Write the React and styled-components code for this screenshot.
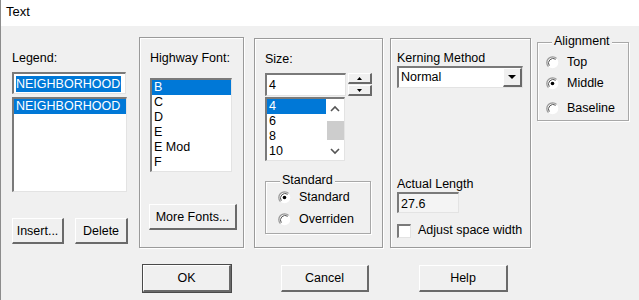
import styled, { createGlobalStyle } from 'styled-components';

const GlobalStyle = createGlobalStyle`
  html, body {
    margin: 0;
    padding: 0;
    background: #f0f0f0;
  }
  body {
    font-family: "Liberation Sans", Arial, sans-serif;
    font-size: 12.5px;
    color: #000;
  }
`;

const App = () => {
  return (
    <Window>
      <GlobalStyle />
      <TitleBar>Text</TitleBar>
      <Body>
        <PanelRow>
          <LegendColumn>
            <Label>Legend:</Label>
            <EditBox $width={114} $height={22}>
              <Selected>NEIGHBORHOOD</Selected>
            </EditBox>
            <ListBox $width={115} $height={95} $top={3}>
              <ListItem $selected>NEIGHBORHOOD</ListItem>
            </ListBox>
            <ButtonRow>
              <Button $width={52} $height={26}>Insert...</Button>
              <Button $width={53} $height={26}>Delete</Button>
            </ButtonRow>
          </LegendColumn>

          <Panel $width={105} $height={211} $left={11}>
            <Label>Highway Font:</Label>
            <ListBox $width={82} $height={94} $top={6}>
              <ListItem $selected>B</ListItem>
              <ListItem>C</ListItem>
              <ListItem>D</ListItem>
              <ListItem>E</ListItem>
              <ListItem>E Mod</ListItem>
              <ListItem>F</ListItem>
            </ListBox>
            <Button $width={88} $height={26} $top={32} $shift={-1}>
              More Fonts...
            </Button>
          </Panel>

          <Panel $width={129} $height={210} $left={10} $offset={1}>
            <Label>Size:</Label>
            <SpinRow>
              <EditBox $width={81} $height={23} $top={0}>4</EditBox>
              <Spinner>
                <SpinHalf>
                  <svg width="5" height="3" viewBox="0 0 5 3">
                    <path d="M2.5 0 L5 3 L0 3 Z" fill="#000" />
                  </svg>
                </SpinHalf>
                <SpinHalf>
                  <svg width="5" height="3" viewBox="0 0 5 3">
                    <path d="M0 0 L5 0 L2.5 3 Z" fill="#000" />
                  </svg>
                </SpinHalf>
              </Spinner>
            </SpinRow>
            <ListBox $width={80} $height={64} $top={1} $scroll>
              <ListInner>
                <ListItem $selected>4</ListItem>
                <ListItem>6</ListItem>
                <ListItem>8</ListItem>
                <ListItem>10</ListItem>
              </ListInner>
              <ScrollBar>
                <svg width="10" height="7" viewBox="0 0 10 7">
                  <path d="M1 6 L5 2 L9 6" stroke="#555" strokeWidth="1.6" fill="none" />
                </svg>
                <Thumb />
                <svg width="10" height="7" viewBox="0 0 10 7">
                  <path d="M1 1 L5 5 L9 1" stroke="#555" strokeWidth="1.6" fill="none" />
                </svg>
              </ScrollBar>
            </ListBox>
            <GroupBox $width={106} $height={53} $top={20}>
              <GroupLegend $left={14}>Standard</GroupLegend>
              <RadioRow $top={8} $left={12}>
                <Radio checked />
                <span>Standard</span>
              </RadioRow>
              <RadioRow $top={7} $left={12}>
                <Radio />
                <span>Overriden</span>
              </RadioRow>
            </GroupBox>
          </Panel>

          <Panel $width={141} $height={210} $left={7} $offset={1} $pad={6} $padTop={12}>
            <Label $gap={0}>Kerning Method</Label>
            <Combo>
              <ComboText>Normal</ComboText>
              <ComboButton>
                <svg width="8" height="4" viewBox="0 0 8 4">
                  <path d="M0 0 L8 0 L4 4 Z" fill="#000" />
                </svg>
              </ComboButton>
            </Combo>
            <Label $top={89} $gap={0}>Actual Length</Label>
            <EditBox $width={62} $height={21} $top={0} $readonly>27.6</EditBox>
            <CheckRow>
              <CheckBox />
              <span>Adjust space width</span>
            </CheckRow>
          </Panel>

          <GroupBox $width={92} $height={79} $top={5} $left={6}>
            <GroupLegend $left={14}>Alignment</GroupLegend>
            <RadioRow $top={12} $left={8}>
              <Radio />
              <span>Top</span>
            </RadioRow>
            <RadioRow $top={6} $left={8}>
              <Radio checked />
              <span>Middle</span>
            </RadioRow>
            <RadioRow $top={10} $left={8}>
              <Radio />
              <span>Baseline</span>
            </RadioRow>
          </GroupBox>
        </PanelRow>

        <DialogButtons>
          <Button $width={88} $height={27} $default>OK</Button>
          <Button $width={88} $height={27}>Cancel</Button>
          <Button $width={89} $height={27}>Help</Button>
        </DialogButtons>
      </Body>
    </Window>
  );
};

const Radio = ({ checked }) => (
  <RadioIcon width="13" height="13" viewBox="0 0 13 13">
    <circle cx="6.5" cy="6.5" r="5.8" fill="#fff" />
    <path d="M2.4 10.6 A5.8 5.8 0 0 1 10.6 2.4" stroke="#9a9a9a" strokeWidth="1.3" fill="none" />
    <path d="M3.3 9.7 A4.6 4.6 0 0 1 9.7 3.3" stroke="#555" strokeWidth="1" fill="none" />
    {checked && <circle cx="6.5" cy="6.5" r="1.8" fill="#000" />}
  </RadioIcon>
);

export default App;

const Window = styled.div`
  width: 639px;
  height: 300px;
  background: #f0f0f0;
  border-left: 1px solid #8c8c8c;
  box-sizing: border-box;
  overflow: hidden;
`;

const TitleBar = styled.div`
  height: 26px;
  background: #fff;
  padding-left: 5px;
  font-size: 13px;
  line-height: 24px;
`;

const Body = styled.div`
  padding: 11px 0 0 11px;
`;

const PanelRow = styled.div`
  display: flex;
  align-items: flex-start;
`;

const LegendColumn = styled.div`
  width: 116px;
  display: flex;
  flex-direction: column;
  padding-top: 14px;
`;

const Panel = styled.div`
  box-sizing: border-box;
  width: ${(p) => p.$width}px;
  height: ${(p) => p.$height}px;
  margin-left: ${(p) => p.$left || 0}px;
  margin-top: ${(p) => p.$offset || 0}px;
  border: 1px solid #9a9a9a;
  box-shadow: inset 1px 1px 0 #fff, 1px 1px 0 #fff;
  padding: ${(p) => p.$padTop ?? 13}px 0 0 ${(p) => p.$pad || 10}px;
  display: flex;
  flex-direction: column;
  align-items: flex-start;
`;

const Label = styled.div`
  line-height: 15px;
  margin-top: ${(p) => p.$top || 0}px;
  margin-bottom: ${(p) => p.$gap ?? 6}px;
  white-space: nowrap;
`;

const EditBox = styled.div`
  box-sizing: border-box;
  width: ${(p) => p.$width}px;
  height: ${(p) => p.$height}px;
  margin-top: ${(p) => p.$top || 0}px;
  background: ${(p) => (p.$readonly ? '#f4f4f4' : '#fff')};
  border-style: solid;
  border-width: 2px 1px 1px 2px;
  border-color: #7a7a7a #e3e3e3 #e3e3e3 #7a7a7a;
  padding: 2px 0 0 2px;
  line-height: 16px;
  white-space: nowrap;
`;

const Selected = styled.span`
  background: #0078d7;
  color: #fff;
  padding: 1px 1px 1px 0;
`;

const ListBox = styled.div`
  box-sizing: border-box;
  width: ${(p) => p.$width}px;
  height: ${(p) => p.$height}px;
  margin-top: ${(p) => p.$top || 0}px;
  background: #fff;
  border-style: solid;
  border-width: 2px 1px 1px 2px;
  border-color: #7a7a7a #e3e3e3 #e3e3e3 #7a7a7a;
  overflow: hidden;
  display: ${(p) => (p.$scroll ? 'flex' : 'block')};
`;

const ListInner = styled.div`
  flex: 1;
`;

const ListItem = styled.div`
  height: 15px;
  line-height: 15px;
  padding-left: 2px;
  background: ${(p) => (p.$selected ? '#0078d7' : 'transparent')};
  color: ${(p) => (p.$selected ? '#fff' : '#000')};
  white-space: nowrap;
`;

const ScrollBar = styled.div`
  width: 18px;
  background: #fff;
  display: flex;
  flex-direction: column;
  align-items: center;
  justify-content: space-between;
  padding: 6px 0 5px;
  box-sizing: border-box;
`;

const Thumb = styled.div`
  width: 17px;
  height: 19px;
  background: #cdcdcd;
`;

const ButtonRow = styled.div`
  display: flex;
  gap: 11px;
  margin-top: 26px;
`;

const Button = styled.div`
  box-sizing: border-box;
  width: ${(p) => p.$width}px;
  height: ${(p) => p.$height}px;
  margin-top: ${(p) => p.$top || 0}px;
  margin-left: ${(p) => p.$shift || 0}px;
  background: #f0f0f0;
  border-style: solid;
  border-width: 1px 2px 2px 1px;
  border-color: #fff #6a6a6a #6a6a6a #fff;
  box-shadow: ${(p) => (p.$default ? '0 0 0 1px #4a4a4a' : 'none')};
  display: flex;
  align-items: center;
  justify-content: center;
  white-space: nowrap;
`;

const SpinRow = styled.div`
  display: flex;
  gap: 2px;
`;

const Spinner = styled.div`
  width: 24px;
  height: 23px;
  display: flex;
  flex-direction: column;
  gap: 1px;
`;

const SpinHalf = styled.div`
  flex: 1;
  box-sizing: border-box;
  border-style: solid;
  border-width: 1px 2px 2px 1px;
  border-color: #fff #6a6a6a #6a6a6a #fff;
  display: flex;
  align-items: center;
  justify-content: center;
`;

const GroupBox = styled.div`
  position: relative;
  box-sizing: border-box;
  width: ${(p) => p.$width}px;
  height: ${(p) => p.$height}px;
  margin-top: ${(p) => p.$top || 0}px;
  margin-left: ${(p) => p.$left || 0}px;
  border: 1px solid #a8a8a8;
  box-shadow: inset 1px 1px 0 #fff, 1px 1px 0 #fff;
  display: flex;
  flex-direction: column;
`;

const GroupLegend = styled.div`
  position: absolute;
  top: -9px;
  left: ${(p) => p.$left}px;
  background: #f0f0f0;
  padding: 0 2px;
  line-height: 15px;
`;

const RadioRow = styled.div`
  display: flex;
  align-items: center;
  gap: 8px;
  margin-top: ${(p) => p.$top}px;
  padding-left: ${(p) => p.$left}px;
  line-height: 15px;
`;

const RadioIcon = styled.svg`
  flex: none;
`;

const Combo = styled.div`
  box-sizing: border-box;
  width: 126px;
  height: 22px;
  background: #fff;
  border-style: solid;
  border-width: 2px 1px 1px 2px;
  border-color: #7a7a7a #e3e3e3 #e3e3e3 #7a7a7a;
  display: flex;
`;

const ComboText = styled.div`
  flex: 1;
  padding: 1px 0 0 2px;
  line-height: 16px;
`;

const ComboButton = styled.div`
  box-sizing: border-box;
  width: 19px;
  height: 19px;
  background: #f0f0f0;
  border-style: solid;
  border-width: 1px 2px 2px 1px;
  border-color: #fff #6a6a6a #6a6a6a #fff;
  display: flex;
  align-items: center;
  justify-content: center;
`;

const CheckRow = styled.div`
  display: flex;
  align-items: center;
  gap: 7px;
  margin-top: 10px;
  line-height: 15px;
`;

const CheckBox = styled.div`
  box-sizing: border-box;
  width: 14px;
  height: 14px;
  background: #fff;
  border-style: solid;
  border-width: 2px 1px 1px 2px;
  border-color: #7a7a7a #e3e3e3 #e3e3e3 #7a7a7a;
`;

const DialogButtons = styled.div`
  display: flex;
  gap: 50px;
  margin-top: 17px;
  padding-left: 131px;
`;
